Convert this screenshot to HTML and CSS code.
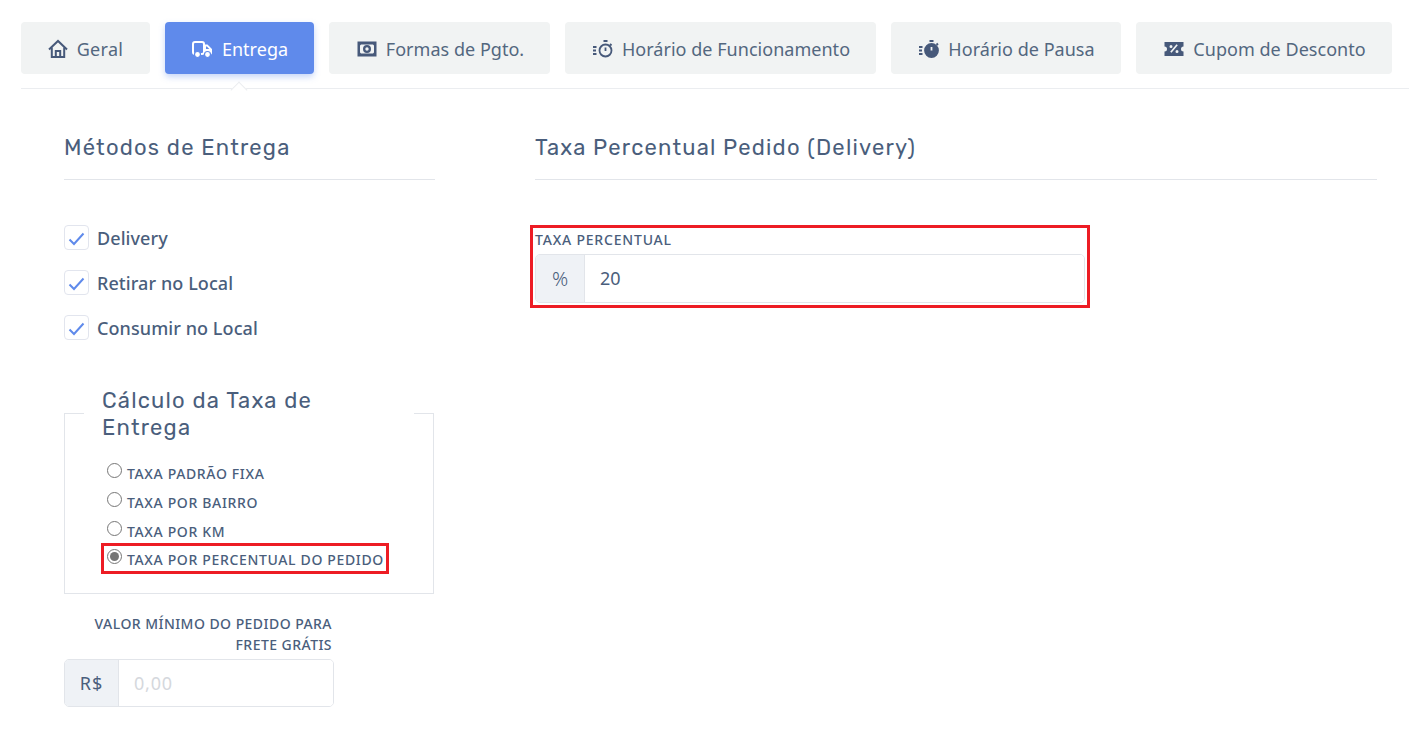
FILE: index.html
```html
<!DOCTYPE html>
<html lang="pt-BR">
<head>
<meta charset="utf-8">
<title>Entrega</title>
<link rel="stylesheet" href="styles.css">
</head>
<body>
<nav class="tabs">
  <a class="tab tab-geral">
    <svg class="ico" viewBox="0 0 20 20" fill="none" stroke="currentColor" stroke-width="2"><path d="M1 10.500 10 2l9 8.500"/><path d="M3.800 8.500V18h12.400V8.500"/><path d="M7.800 18v-6h4.400v6"/></svg>
    Geral</a>
  <a class="tab tab-entrega active">
    <svg class="ico" viewBox="0 0 22 20"><rect x="2" y="3" width="11" height="12" rx="2" fill="none" stroke="currentColor" stroke-width="2"/><path fill="currentColor" fill-rule="evenodd" d="M13 5.500h3.500l4.500 4.500v4a1.500 1.500 0 0 1-1.500 1.500H13ZM15 7.500V10h3.300l-2.400-2.500Z"/><circle cx="6.500" cy="15.500" r="3" fill="currentColor" stroke="#5f8aeb" stroke-width="1.200"/><circle cx="16.500" cy="15.500" r="3" fill="currentColor" stroke="#5f8aeb" stroke-width="1.200"/></svg>
    Entrega</a>
  <a class="tab tab-formas">
    <svg class="ico" viewBox="0 0 20 20" fill="currentColor"><path fill-rule="evenodd" d="M.5 2.500h19v15H.5Zm3.500 3a3 3 0 0 1-1 1v7a3 3 0 0 1 1 1h12a3 3 0 0 1 1-1v-7a3 3 0 0 1-1-1ZM10 6a4 4 0 1 1 0 8 4 4 0 0 1 0-8Zm0 2.300a1.700 1.700 0 1 0 0 3.400 1.700 1.700 0 0 0 0-3.400Z"/></svg>
    Formas de Pgto.</a>
  <a class="tab tab-func">
    <svg class="ico" viewBox="0 0 20 20" fill="none" stroke="currentColor" stroke-width="1.800"><circle cx="12.500" cy="11.500" r="6"/><path d="M12.500 8.500v3.500M10.500 2h4M0 8h3.500M0 11.500h3M0 15h3.500M17 5l1.500 1.500"/></svg>
    Horário de Funcionamento</a>
  <a class="tab tab-pausa">
    <svg class="ico" viewBox="0 0 20 20" fill="none" stroke="currentColor" stroke-width="1.800"><circle cx="12.500" cy="11.500" r="6.500" fill="currentColor"/><path d="M10.500 2h4M0 8h3.500M0 11.500h3M0 15h3.500M17.500 4.500 19 6"/><path d="M12.500 8v3.500" stroke="#f1f3f3"/></svg>
    Horário de Pausa</a>
  <a class="tab tab-cupom">
    <svg class="ico" viewBox="0 0 20 20" fill="currentColor"><path fill-rule="evenodd" d="M.5 3h19v4.500a2.500 2.500 0 0 0 0 5V17H.5v-4.500a2.500 2.500 0 0 0 0-5Zm5.700 9.800 1.300 1 6.300-7.600-1.300-1ZM7 6a1.500 1.500 0 1 0 0 3 1.500 1.500 0 0 0 0-3Zm6 5a1.500 1.500 0 1 0 0 3 1.500 1.500 0 0 0 0-3Z"/></svg>
    Cupom de Desconto</a>
</nav>

<main class="content">
  <section class="col-left">
    <h2 class="section-title">Métodos de Entrega</h2>
    <ul class="checks">
      <li class="check"><span class="box"><svg viewBox="0 0 16 14" fill="none" stroke="#5f8aeb" stroke-width="2"><path d="M1 7.500 5.500 12 15 1.500"/></svg></span>Delivery</li>
      <li class="check"><span class="box"><svg viewBox="0 0 16 14" fill="none" stroke="#5f8aeb" stroke-width="2"><path d="M1 7.500 5.500 12 15 1.500"/></svg></span>Retirar no Local</li>
      <li class="check"><span class="box"><svg viewBox="0 0 16 14" fill="none" stroke="#5f8aeb" stroke-width="2"><path d="M1 7.500 5.500 12 15 1.500"/></svg></span>Consumir no Local</li>
    </ul>
    <fieldset class="calc">
      <legend class="calc-title">Cálculo da Taxa de Entrega</legend>
      <label class="radio"><input type="radio" name="taxa"><span>TAXA PADRÃO FIXA</span></label>
      <label class="radio"><input type="radio" name="taxa"><span>TAXA POR BAIRRO</span></label>
      <label class="radio"><input type="radio" name="taxa"><span>TAXA POR KM</span></label>
      <label class="radio radio-marked"><input type="radio" name="taxa" checked><span>TAXA POR PERCENTUAL DO PEDIDO</span></label>
    </fieldset>
    <div class="min-value">
      <label class="field-label right">VALOR MÍNIMO DO PEDIDO PARA FRETE GRÁTIS</label>
      <div class="group group-small">
        <span class="addon addon-rs">R$</span>
        <input class="control control-empty" type="text" placeholder="0,00">
      </div>
    </div>
  </section>

  <section class="col-right">
    <h2 class="section-title">Taxa Percentual Pedido (Delivery)</h2>
    <div class="marked-field">
      <label class="field-label">TAXA PERCENTUAL</label>
      <div class="group">
        <span class="addon addon-pct">%</span>
        <input class="control control-value" type="text" value="20">
      </div>
    </div>
  </section>
</main>
</body>
</html>
```
FILE: styles.css
```css
* { box-sizing: border-box; }
html, body { margin: 0; height: 100%; overflow: hidden; }
body {
  background: #fff;
  color: #4a5e7c;
  font-family: "Noto Sans", "Open Sans", sans-serif;
  padding: 22px 3px 0 21px;
}
.tabs {
  position: relative;
  display: flex;
  gap: 15px;
  padding-bottom: 14px;
  border-bottom: 1px solid #ebedf0;
}
.tab {
  display: flex;
  align-items: center;
  justify-content: center;
  gap: 9px;
  height: 52px;
  padding: 2px 0 0 2px;
  background: #f1f3f3;
  border-radius: 4px;
  font-size: 18px;
  letter-spacing: .03px;
  color: #53677f;
  white-space: nowrap;
}
.tab-geral { width: 129px; padding-left: 0; letter-spacing: .3px; }
.tab-entrega { width: 149px; padding-left: 0; }
.tab-formas { width: 221px; }
.tab-func { width: 311px; }
.tab-pausa { width: 230px; }
.tab-cupom { width: 256px; }
.ico { width: 20px; height: 20px; flex: none; color: #47597a; }
.tab.active {
  position: relative;
  background: #5f8aeb;
  color: #fff;
  box-shadow: 0 3px 6px rgba(95, 138, 235, .35);
}
.tab.active .ico { color: #fff; width: 22px; }
.tab.active::after {
  content: "";
  position: absolute;
  left: 68px;
  top: 62px;
  width: 11px;
  height: 11px;
  background: #fff;
  border-left: 1px solid #ebedf0;
  border-top: 1px solid #ebedf0;
  transform: rotate(45deg);
}
.content {
  display: grid;
  grid-template-columns: 371px 842px;
  column-gap: 100px;
  padding-left: 43px;
}
.section-title {
  margin: 0;
  padding-top: 44px;
  height: 91px;
  font-family: "Rubik", "Inter", sans-serif;
  font-weight: 400;
  font-size: 22px;
  line-height: 30px;
  letter-spacing: 1.2px;
  color: #4a5e7c;
  border-bottom: 1px solid #e2e5ea;
}
.checks { list-style: none; margin: 45px 0 0; padding: 0; }
.check {
  display: flex;
  align-items: center;
  gap: 8px;
  height: 25px;
  margin-bottom: 20px;
  font-size: 18px;
  font-weight: 500;
  letter-spacing: .08px;
}
.box {
  display: flex;
  align-items: center;
  justify-content: center;
  width: 25px;
  height: 25px;
  border: 1px solid #e2e5ee;
  border-radius: 4px;
}
.box svg { width: 17px; height: 14px; margin-top: 2px; }
.calc {
  width: 370px;
  margin: 46px 0 0;
  padding: 4px 0 19px 38px;
  border: 1px solid #e2e5ea;
  min-inline-size: 0;
}
.calc-title {
  position: relative;
  top: 1px;
  width: 330px;
  margin: 0 0 14px -19px;
  padding: 0 18px;
  font-family: "Rubik", "Inter", sans-serif;
  font-size: 22px;
  line-height: 27px;
  letter-spacing: 1.2px;
}
.radio {
  display: flex;
  align-items: center;
  height: 29px;
  font-size: 14px;
  font-weight: 500;
  letter-spacing: .65px;
  white-space: nowrap;
}
.radio input {
  width: 15px;
  height: 15px;
  margin: -5px 5px 0 4px;
  accent-color: #767676;
}
.radio span { padding-top: 2px; }
.radio-marked {
  width: 288px;
  height: 31px;
  margin: -2px 0 0 -2px;
  outline: 3px solid #ed1c24;
  outline-offset: -3px;
}
.radio-marked input { margin-left: 6px; }
.min-value { width: 270px; margin-top: 19px; }
.field-label {
  display: block;
  font-size: 14px;
  font-weight: 500;
  letter-spacing: .45px;
  line-height: 21px;
}
.field-label.right { text-align: right; padding: 0 2px 0 20px; margin-bottom: 4px; }
.group {
  display: flex;
  height: 49px;
  border: 1px solid #e2e5ea;
  border-radius: 5px;
  overflow: hidden;
}
.group-small { height: 48px; }
.addon {
  display: flex;
  align-items: center;
  justify-content: center;
  flex: none;
  background: #eff2f6;
  border-right: 1px solid #e2e5ea;
  font-size: 18px;
}
.addon-rs { width: 54px; letter-spacing: 1px; }
.addon-pct { width: 49px; font-size: 20px; font-weight: 300; }
.control {
  flex: 1;
  min-width: 0;
  border: 0;
  outline: 0;
  padding: 0 15px;
  font: inherit;
  font-size: 18px;
  color: #4a5e7c;
  background: #fff;
}
.control-value { padding-bottom: 2px; }
.control-empty { letter-spacing: .8px; }
.control::placeholder { color: #d5d8dd; opacity: 1; }
.marked-field {
  width: 560px;
  margin: 45px 0 0 -5px;
  padding: 2px 2px 2px 2px;
  border: 3px solid #ed1c24;
}
.marked-field .field-label { line-height: 20px; margin-bottom: 4px; letter-spacing: .8px; }
```
